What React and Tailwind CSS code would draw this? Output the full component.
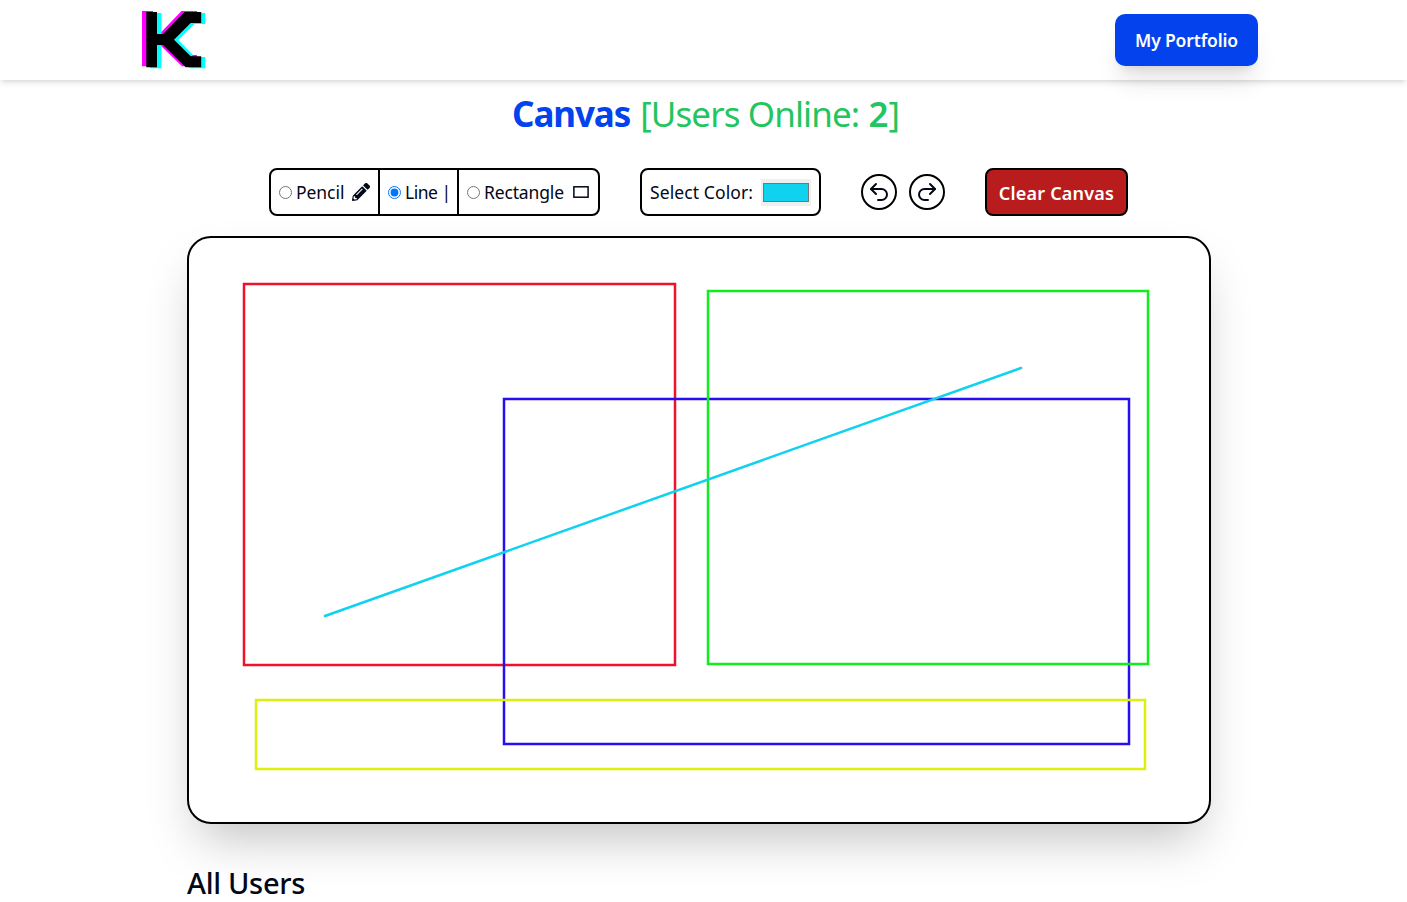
import { LuUndo2, LuRedo2 } from "react-icons/lu";
import { FaPencilAlt } from "react-icons/fa";

function Logo() {
  return (
    <svg width="64" height="58" viewBox="0 0 64 58" aria-label="K">
      <path fill="#00ffff" d="M24 29L47 2H63.3V13H52.5L36.3 29L51 44L53 46H63.3V57.3H48Z" />
      <path fill="#ff00ff" d="M0 0H11V55.3H0ZM15 25.5L39.5 0H55V12H44L28 29L44 45H50L51 44H55V55.3H40L16 32Z" />
      <path fill="#00ffff" d="M8 2H19.5V57.3H8Z" />
      <path fill="#000" d="M4.3 1H15V23H21L42.5 1H59.2V12H48.7L32 28.7L48.7 45.2H59.2V56.3H43.7L21 34H15V56.3H4.3Z" />
    </svg>
  );
}

function RectangleIcon() {
  return (
    <svg width="16" height="12" viewBox="0 0 16 12" fill="none" stroke="currentColor" strokeWidth="1.5" className="ml-[9px]">
      <rect x="0.9" y="0.8" width="14.2" height="10.4" />
    </svg>
  );
}

function Tool({ label, checked, icon, className }) {
  return (
    <label className={`flex items-center pl-2 ${className}`}>
      <input type="radio" name="tool" defaultChecked={checked} className="mr-1 h-[13px] w-[13px]" />
      <span>{label}</span>
      {icon}
    </label>
  );
}

export default function App() {
  return (
    <div className="h-[902px] overflow-hidden bg-white font-['Noto_Sans','Open_Sans',sans-serif] text-[#020817]">
      <header className="flex h-20 items-center justify-between bg-white pr-[149px] pl-[142px] shadow-md">
        <Logo />
        <button className="h-[52px] w-[143px] rounded-[10px] bg-[#0442ee] text-[17.5px] font-semibold tracking-[-0.15px] text-white shadow-xl">
          My Portfolio
        </button>
      </header>

      <main className="ml-[187px] w-[1024px]">
        <h1 className="flex h-[88px] justify-center pt-[13px] pl-[14px] text-[35px] leading-[42px] whitespace-pre text-[#22c55e]">
          <span className="font-bold tracking-[-1.1px] text-[#0442ee]">Canvas </span>
          <span className="ml-[2px] font-normal tracking-[-0.9px]">[Users Online: </span>
          <span className="ml-px font-semibold">2</span>
          <span className="font-normal">]</span>
        </h1>

        <div className="flex h-12 items-center pl-[82px] text-[17.5px] tracking-[-0.05px]">
          <div className="flex h-12 w-[331px] rounded-lg border-2 border-black bg-white">
            <Tool label="Pencil" className="w-[109px] border-r-2 border-black" icon={<FaPencilAlt className="ml-2 h-[18px] w-[18px]" />} />
            <Tool label="Line |" checked className="w-[79px] border-r-2 border-black tracking-[-0.5px]" />
            <Tool label="Rectangle" className="w-[139px] tracking-[-0.15px]" icon={<RectangleIcon />} />
          </div>
          <div className="ml-10 flex h-12 w-[181px] items-center rounded-lg border-2 border-black bg-white pl-2">
            <span className="w-[103px] tracking-[0.1px] whitespace-nowrap">Select Color:</span>
            <div className="ml-2 h-[27px] w-[50px] bg-[#efefef] px-[2px] py-1">
              <div className="h-[19px] border border-[#767676] bg-[#0fd2ee]" />
            </div>
          </div>
          <button className="ml-10 flex h-9 w-9 items-center justify-center rounded-full border-2 border-black bg-white">
            <LuUndo2 className="h-6 w-6 shrink-0" />
          </button>
          <button className="ml-3 flex h-9 w-9 items-center justify-center rounded-full border-2 border-black bg-white">
            <LuRedo2 className="h-6 w-6 shrink-0" />
          </button>
          <button className="ml-10 h-12 w-[143px] rounded-lg border-2 border-black bg-[#b91c1c] pt-0.5 text-[18px] font-semibold tracking-[0.2px] text-white">
            Clear Canvas
          </button>
        </div>

        <section className="mt-5 h-[588px] w-[1024px] overflow-hidden rounded-3xl border-2 border-black bg-white shadow-2xl">
          <svg width="1020" height="584" viewBox="189 238 1020 584" fill="none" strokeWidth="2.5">
            <rect x="244" y="284" width="431" height="381" stroke="#f0102a" />
            <rect x="504" y="399" width="625" height="345" stroke="#260fee" />
            <rect x="708" y="291" width="440" height="373" stroke="#0fee1a" />
            <rect x="256" y="700" width="889" height="69" stroke="#deee0f" />
            <path d="M325 616L1021 368" stroke="#0fd2ee" strokeLinecap="round" />
          </svg>
        </section>

        <h2 className="mt-[39px] text-[29px] leading-[40px] font-medium tracking-[-0.3px]">All Users</h2>
      </main>
    </div>
  );
}
